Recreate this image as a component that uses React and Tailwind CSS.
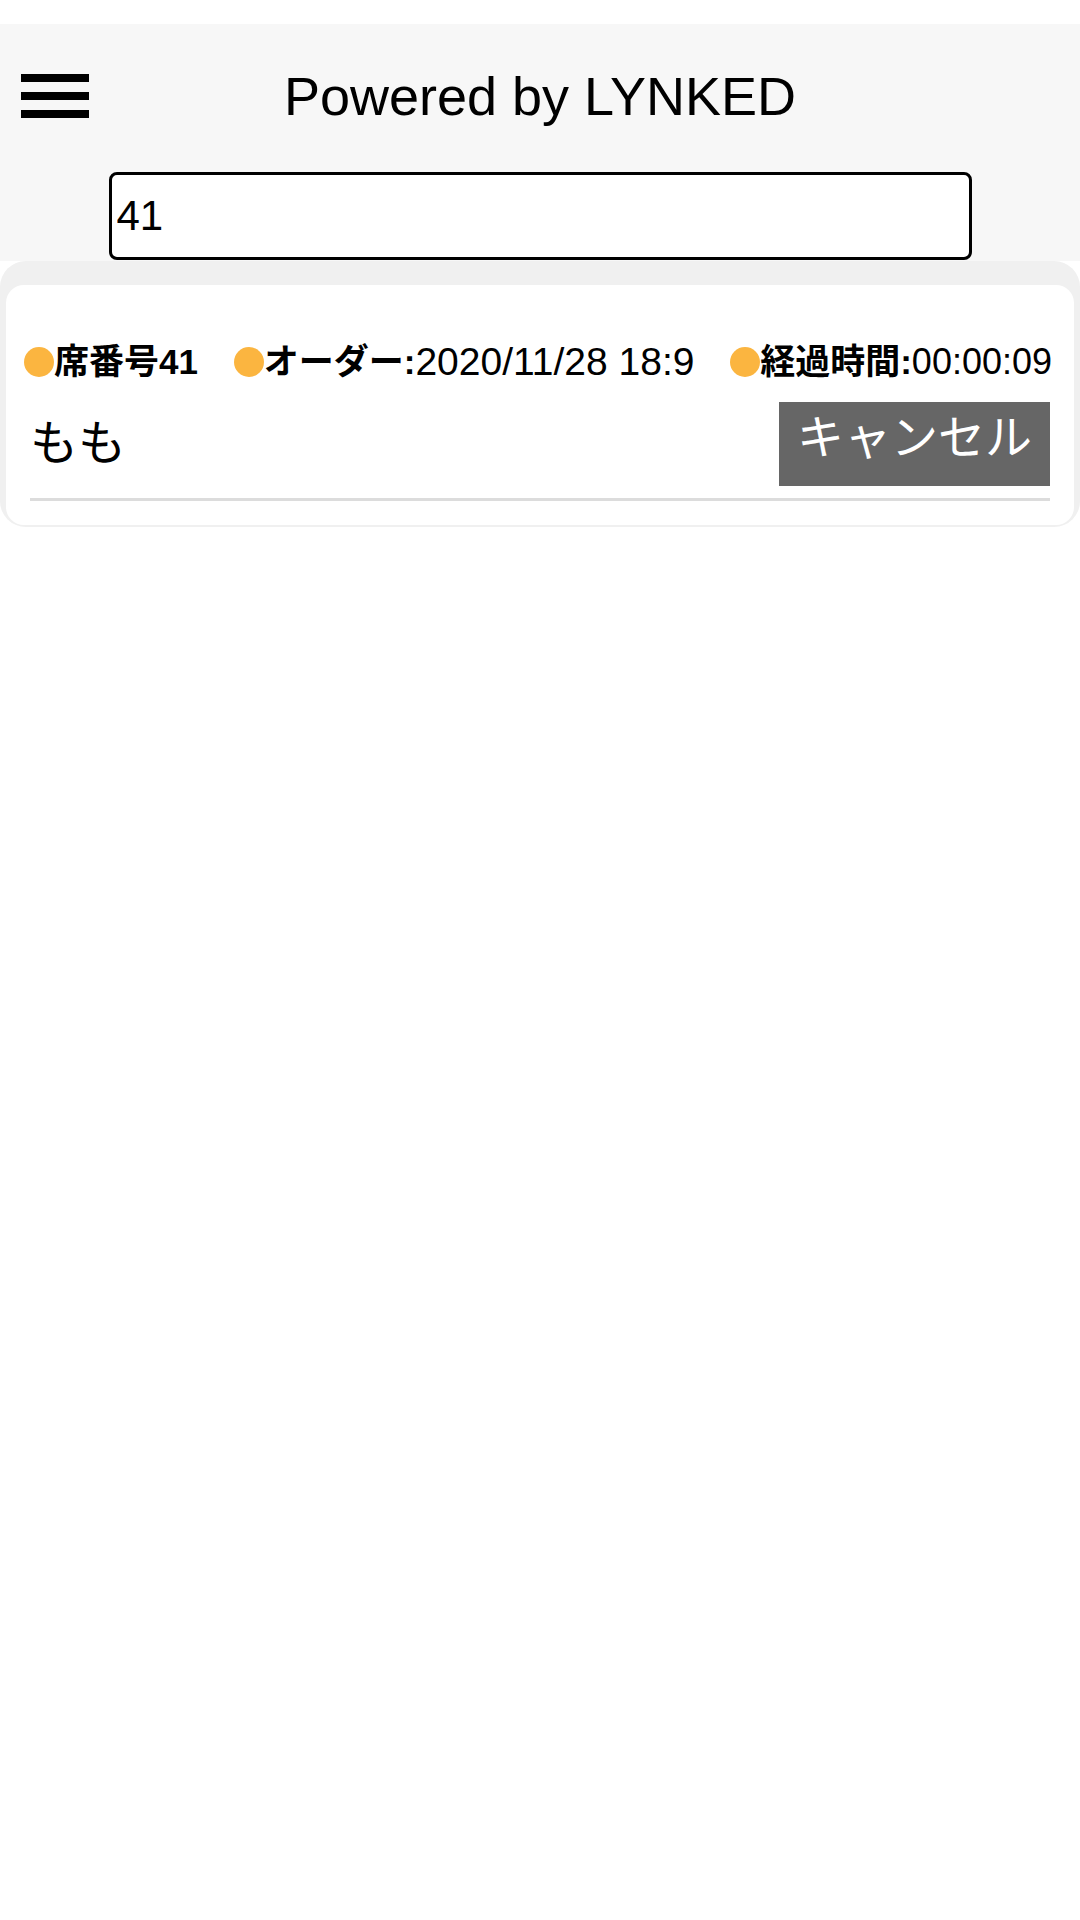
import React from 'react'

const font = { fontFamily: '"Liberation Sans", "Noto Sans CJK JP", sans-serif' }

// 情報行の1項目
const InfoItem = ({ label, value, valueClass }) => (
  <div className="flex items-center">
    <span className="w-[30px] h-[30px] rounded-full bg-[#fbb540] shrink-0" />
    <span className="text-[35px] font-bold leading-none text-black">{label}</span>
    {value && <span className={`${valueClass} leading-none text-black`}>{value}</span>}
  </div>
)

const App = () => {
  return (
    <div className="min-h-[1920px] bg-white" style={font}>
      {/* 上部の余白 */}
      <div className="h-[24px] bg-white" />

      {/* ヘッダー */}
      <div className="bg-[#f7f7f7] pb-[1px]">
        <div className="grid grid-cols-[1fr_auto_1fr] items-center h-[144px]">
          <div className="pl-[21px]">
            <div className="flex flex-col gap-[10px] w-[68px]">
              <span className="block h-[8px] bg-black" />
              <span className="block h-[8px] bg-black" />
              <span className="block h-[8px] bg-black" />
            </div>
          </div>
          <h1 className="text-[54px] leading-none text-black font-normal">Powered by LYNKED</h1>
          <div />
        </div>
        <div className="mt-[4px] flex justify-center">
          <input
            type="text"
            defaultValue="41"
            className="w-[863px] h-[88px] border-[3px] border-black rounded-[8px] bg-white px-[5px] text-[42px] text-black outline-none"
            style={font}
          />
        </div>
      </div>

      {/* 注文一覧 */}
      <div className="bg-[#f0f0f0] rounded-[26px] pt-[24px] px-[6px] pb-[2px]">
        <div className="bg-white rounded-[18px] pt-[57px] pb-[24px]">
          <div className="flex items-center justify-between pl-[18px] pr-[22px]">
            <InfoItem label="席番号41" />
            <InfoItem label="オーダー:" value="2020/11/28 18:9" valueClass="text-[39px]" />
            <InfoItem label="経過時間:" value="00:00:09" valueClass="text-[36px]" />
          </div>

          <div className="mt-[21px] flex items-center justify-between px-[24px]">
            <span className="text-[48px] leading-none text-black">もも</span>
            <button className="h-[84px] bg-[#666666] px-[18px] pt-[12px] text-[47px] leading-none text-white flex items-start">
              キャンセル
            </button>
          </div>

          <div className="mt-[12px] mx-[24px] h-[3px] bg-[#dcdcdc]" />
        </div>
      </div>
    </div>
  )
}

export default App
